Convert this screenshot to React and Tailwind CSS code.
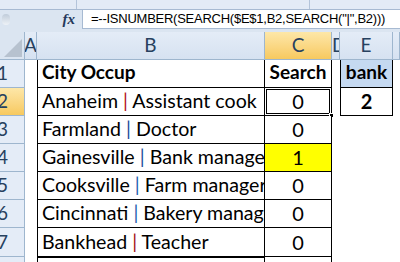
import React from "react";

// anchos de columnas: encabezado de fila, A, B, C, D, E, F
const GRID = "grid grid-cols-[25px_12px_228px_67px_8px_53px_7px]";
const CELL_FONT = "font-['Lato','Liberation_Sans',sans-serif] text-black";

const rows = [
  { n: 2, city: "Anaheim", job: "Assistant cook", pipe: "text-[#b3121b]", val: "0", active: true, e: "2" },
  { n: 3, city: "Farmland", job: "Doctor", pipe: "text-[#1b4f9c]", val: "0" },
  { n: 4, city: "Gainesville", job: "Bank manager", pipe: "text-[#1b4f9c]", val: "1", yellow: true },
  { n: 5, city: "Cooksville", job: "Farm manager", pipe: "text-[#1b5fb0]", val: "0" },
  { n: 6, city: "Cincinnati", job: "Bakery manager", pipe: "text-[#1b5fb0]", val: "0" },
  { n: 7, city: "Bankhead", job: "Teacher", pipe: "text-[#a3121b]", val: "0", tall: true },
];

const ColHead = ({ label, selected, className = "" }) => (
  <div
    className={`flex items-center justify-center border-r border-b border-[#9eb6ce] overflow-hidden text-[19px] text-[#27415f] font-['Lato','Liberation_Sans',sans-serif] ${
      selected ? "bg-gradient-to-b from-[#fde7a8] to-[#f7c95e]" : "bg-gradient-to-b from-[#e4ecf7] to-[#d6e2f1]"
    } ${className}`}
  >
    {label}
  </div>
);

const RowHead = ({ n, selected }) => (
  <div
    className={`flex items-end pb-[3px] border-r border-b border-[#9eb6ce] overflow-hidden text-[19px] leading-[22px] text-[#27415f] font-['Lato','Liberation_Sans',sans-serif] ${
      selected ? "bg-gradient-to-b from-[#fde7a8] to-[#f7c95e]" : "bg-[#e4ecf7]"
    }`}
  >
    <span className="-ml-[3px]">{n}</span>
  </div>
);

export default function App() {
  return (
    <div className="w-[400px] h-[262px] overflow-hidden bg-[#dbe5f1]">
      {/* franja superior */}
      <div className="h-[10px] flex border-b border-[#a7bad2] bg-[#e3ebf6]">
        <div className="w-[77px] border-r border-[#b3c4da]" />
        <div className="w-[233px] border-r border-[#b3c4da]" />
      </div>

      {/* barra de fórmulas */}
      <div className="h-[19px] flex">
        <div className="w-[82px] flex items-center">
          <div className="ml-[2px] w-[8px] h-[11px] rounded-full bg-gradient-to-b from-[#c0ccda] to-[#eef2f7]" />
          <span className="ml-auto mr-[7px] font-['Liberation_Serif',serif] italic font-bold text-[15px] text-[#24385a] leading-none">
            fx
          </span>
        </div>
        <div className="flex-1 bg-white border-l border-b border-[#a7bad2] flex items-center pl-[8px]">
          <span className="font-['Liberation_Sans',sans-serif] text-[13px] text-black whitespace-nowrap tracking-[-0.25px]">
            =--ISNUMBER(SEARCH($E$1,B2,SEARCH("|",B2)))
          </span>
        </div>
      </div>

      <div className="h-[3px]" />

      {/* encabezados de columna */}
      <div className={`${GRID} h-[28px]`}>
        <div className="border-r border-b border-[#9eb6ce] bg-[#dbe5f1] flex items-end justify-end pr-[2px] pb-[2px]">
          <svg width="18" height="18" viewBox="0 0 18 18">
            <polygon points="18,0 18,18 0,18" fill="#b7c2cf" />
          </svg>
        </div>
        <ColHead label="A" />
        <ColHead label="B" />
        <ColHead label="C" selected />
        <ColHead label="D" className="justify-start" />
        <ColHead label="E" />
        <ColHead label="" />
      </div>

      {/* fila 1 */}
      <div className={`${GRID} h-[28px]`}>
        <RowHead n={1} />
        <div className="bg-white" />
        <div className={`bg-white border-l border-r border-b border-black flex items-end pb-[4px] pl-[4px] ${CELL_FONT} text-[19px] font-bold leading-[22px]`}>
          City Occup
        </div>
        <div className={`bg-white border-r border-b border-black flex items-end justify-center pb-[4px] ${CELL_FONT} text-[19px] font-bold leading-[22px]`}>
          Search
        </div>
        <div className="bg-white" />
        <div className={`bg-[#c5d9f1] border-l border-r border-b border-black flex items-end justify-center pb-[4px] ${CELL_FONT} text-[19px] font-bold leading-[22px]`}>
          bank
        </div>
        <div className="bg-white" />
      </div>

      {rows.map((r) => (
        <div key={r.n} className={`${GRID} ${r.tall ? "h-[29px]" : "h-[28px]"}`}>
          <RowHead n={r.n} selected={r.active} />
          <div className="bg-white" />
          <div className={`bg-white border-l border-r border-b border-black flex items-end pb-[3px] pl-[4px] overflow-hidden whitespace-nowrap ${CELL_FONT} text-[19.6px] leading-[22px]`}>
            {r.city}&nbsp;<span className={r.pipe}>|</span>&nbsp;{r.job}
          </div>
          <div
            className={`relative border-r border-b border-black flex items-end justify-center pb-[3px] ${CELL_FONT} text-[20px] leading-[22px] ${
              r.yellow ? "bg-[#ffff00]" : "bg-white"
            }`}
          >
            {r.val}
            {r.active && (
              <>
                <div className="absolute inset-[1px] border-[1.5px] border-black pointer-events-none" />
                <div className="absolute -right-[3px] -bottom-[3px] w-[5px] h-[5px] bg-black border border-white" />
              </>
            )}
          </div>
          <div className="bg-white" />
          {r.e ? (
            <div className={`bg-white border-l border-r border-b border-black flex items-end justify-center pb-[3px] ${CELL_FONT} text-[20px] font-bold leading-[22px]`}>
              {r.e}
            </div>
          ) : (
            <div className="bg-white" />
          )}
          <div className="bg-white" />
        </div>
      ))}

      {/* fila 8 (parcial) */}
      <div className={`${GRID} h-[10px]`}>
        <div className="bg-[#e4ecf7] border-r border-[#9eb6ce]" />
        <div className="bg-white" />
        <div className="bg-white border-l border-r border-t border-black" />
        <div className="bg-white border-r border-black" />
        <div className="bg-white" />
        <div className="bg-white" />
        <div className="bg-white" />
      </div>
    </div>
  );
}
